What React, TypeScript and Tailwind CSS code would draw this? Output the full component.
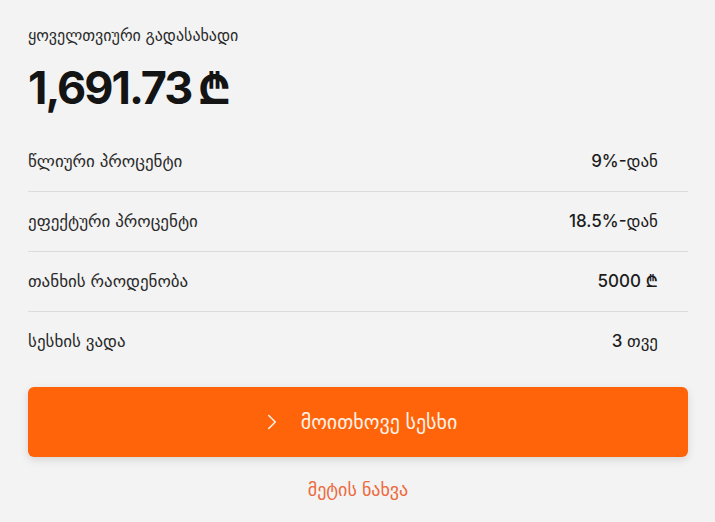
import { ChevronRight } from "lucide-react";

const rows = [
  { label: "წლიური პროცენტი", value: "9%-დან" },
  { label: "ეფექტური პროცენტი", value: "18.5%-დან" },
  { label: "თანხის რაოდენობა", value: "5000 ₾" },
  { label: "სესხის ვადა", value: "3 თვე" },
];

export default function App() {
  return (
    <div
      className="w-[715px] h-[522px] bg-[#f3f3f3] px-[28px] pt-[24px] text-[#1c1c1c]"
      style={{ fontFamily: "Inter, 'DejaVu Sans', sans-serif" }}
    >
      <p className="text-[16px] leading-[22px] text-[#2a2a2a]">ყოველთვიური გადასახადი</p>
      <h1 className="mt-[14px] flex items-center gap-[6px] text-[45px] leading-[56px] font-bold tracking-[-2px] text-[#141414]">
        <span>1,691.73</span>
        <span className="tracking-normal">₾</span>
      </h1>

      <div className="mt-[16px] w-[660px]">
        {rows.map((r, i) => (
          <div
            key={i}
            className={`flex h-[60px] items-center justify-between pr-[30px] ${
              i < rows.length - 1 ? "border-b border-[#dcdcdc]" : ""
            }`}
          >
            <span className="text-[17px] text-[#2a2a2a]">{r.label}</span>
            <span className="text-[17px] font-medium text-[#1c1c1c]">{r.value}</span>
          </div>
        ))}
      </div>

      <button className="mt-[15px] flex h-[70px] w-[660px] items-center justify-center gap-[16px] rounded-[6px] bg-[#ff640b] text-[#fdf1e6] shadow-[0_3px_8px_rgba(0,0,0,0.12)]">
        <ChevronRight className="h-[26px] w-[26px]" strokeWidth={1.4} />
        <span className="text-[20px] uppercase">მოითხოვე სესხი</span>
      </button>

      <p className="mt-[19px] w-[660px] text-center text-[18px] text-[#ec6a3c]">მეტის ნახვა</p>
    </div>
  );
}
